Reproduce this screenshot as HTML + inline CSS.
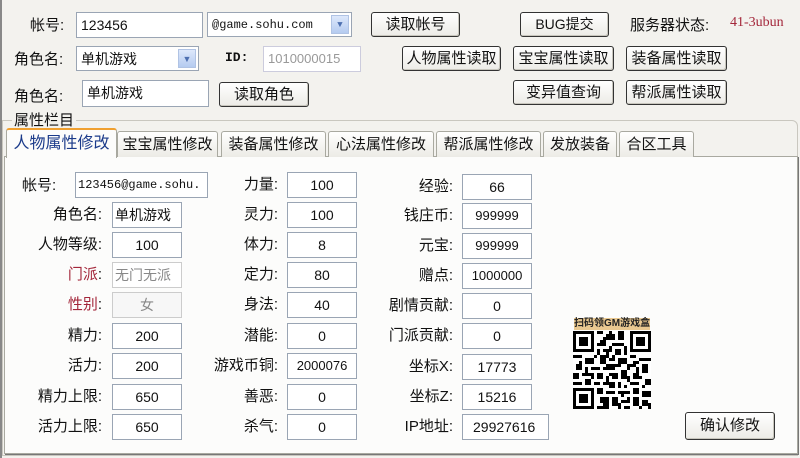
<!DOCTYPE html>
<html><head><meta charset="utf-8">
<style>
*{box-sizing:border-box;margin:0;padding:0}
body{width:800px;height:458px;background:#f3f2ee;font-family:"Liberation Sans","Noto Sans CJK SC",sans-serif;font-size:15px;color:#111;position:relative;overflow:hidden}
.a{position:absolute;white-space:nowrap}
.in{position:absolute;background:#fff;border:1px solid #9aa5b4;height:26px;line-height:24px;padding-left:4px;font-size:14px}
.c{text-align:center;padding-left:0}
.btn{position:absolute;border:1px solid #333;border-radius:3px;background:linear-gradient(#fff,#ecebe6);height:25px;line-height:23px;text-align:center;font-size:15px;box-shadow:inset -1px -1px 0 #c8c6bd}
.dd{position:absolute;right:2px;top:2px;width:18px;bottom:2px;background:linear-gradient(#dde8fb,#b5cbf0);border:1px solid #b0c3e4;color:#4d6fb0;font-size:9px;text-align:center;line-height:18px}
.lbl{position:absolute;text-align:right;width:100px;white-space:nowrap;font-size:15px;line-height:26px}
.tab{position:absolute;top:131px;height:26px;border:1px solid #a9a9a0;border-bottom:none;background:linear-gradient(#fff,#ecebe6);text-align:center;line-height:25px;font-size:15px;border-radius:3px 3px 0 0}
.red{color:#a3263a}
</style></head><body>
<div style="position:absolute;left:0;top:0;width:2px;height:458px;background:#888"></div>

<div class="a" style="left:30px;top:14px">帐号:</div>
<div class="in" style="left:76px;top:12px;width:127px;height:26px">123456</div>
<div class="in" style="left:207px;top:12px;width:145px;height:25px;font-family:'Liberation Mono',monospace;font-size:12px">@game.sohu.com<div class="dd">▼</div></div>
<div class="btn" style="left:371px;top:12px;width:89px">读取帐号</div>
<div class="btn" style="left:520px;top:12px;width:89px;font-size:14px">BUG提交</div>
<div class="a" style="left:630px;top:14px">服务器状态:</div>
<div class="a red" style="left:730px;top:15px;font-family:'Liberation Serif',serif;font-size:14px">41-3ubun</div>

<div class="a" style="left:14px;top:48px">角色名:</div>
<div class="in" style="left:76px;top:46px;width:123px;height:25px">单机游戏<div class="dd">▼</div></div>
<div class="a" style="left:225px;top:50px;font-family:'Liberation Mono',monospace;font-size:13px;font-weight:bold">ID:</div>
<div class="in" style="left:263px;top:46px;width:98px;color:#999;font-size:13px;border-color:#ccd">1010000015</div>
<div class="btn" style="left:402px;top:46px;width:99px">人物属性读取</div>
<div class="btn" style="left:513px;top:46px;width:101px">宝宝属性读取</div>
<div class="btn" style="left:626px;top:46px;width:101px">装备属性读取</div>

<div class="a" style="left:14px;top:85px">角色名:</div>
<div class="in" style="left:82px;top:80px;width:127px;height:27px">单机游戏</div>
<div class="btn" style="left:219px;top:82px;width:90px">读取角色</div>
<div class="btn" style="left:513px;top:80px;width:101px">变异值查询</div>
<div class="btn" style="left:626px;top:80px;width:101px">帮派属性读取</div>

<div style="position:absolute;left:2px;top:120px;width:796px;height:336px;border:1px solid #c9c7bf;border-radius:0 6px 0 0"></div>
<div class="a" style="left:12px;top:109px;background:#f3f2ee;padding:0 2px">属性栏目</div>

<div style="position:absolute;left:4px;top:156px;width:794px;height:298px;background:#fcfcfb;border:1px solid #a9a9a0;box-shadow:1px 1px 0 #777"></div>
<div class="tab" style="left:117px;width:101px">宝宝属性修改</div>
<div class="tab" style="left:221px;width:105px">装备属性修改</div>
<div class="tab" style="left:328px;width:106px">心法属性修改</div>
<div class="tab" style="left:436px;width:105px">帮派属性修改</div>
<div class="tab" style="left:543px;width:74px">发放装备</div>
<div class="tab" style="left:619px;width:75px">合区工具</div>
<div class="tab" style="left:6px;top:128px;width:111px;height:30px;background:#fcfcfb;border-top:2px solid #f0a030;color:#1a3a8a;font-size:16px;line-height:28px">人物属性修改</div>

<div class="a" style="left:22px;top:174px">帐号:</div>
<div class="in" style="left:75px;top:172px;width:133px;font-family:'Liberation Mono',monospace;font-size:12px;padding-left:2px">123456@game.sohu.</div>

<div class="lbl" style="left:2px;top:202px">角色名:</div>
<div class="in" style="left:112px;top:202px;width:70px;padding-left:2px">单机游戏</div>
<div class="lbl" style="left:2px;top:232px">人物等级:</div><div class="in c" style="left:112px;top:232px;width:70px">100</div>
<div class="lbl" style="left:2px;top:262px"><span class="red">门派</span>:</div><div class="in" style="left:112px;top:262px;width:70px;color:#888;border-color:#ccc;padding-left:2px">无门无派</div>
<div class="lbl" style="left:2px;top:292px"><span class="red">性别</span>:</div><div class="in c" style="left:112px;top:292px;width:70px;color:#888;border-color:#ccc;background:#f7f7f7">女</div>
<div class="lbl" style="left:2px;top:323px">精力:</div><div class="in c" style="left:112px;top:323px;width:70px">200</div>
<div class="lbl" style="left:2px;top:353px">活力:</div><div class="in c" style="left:112px;top:353px;width:70px">200</div>
<div class="lbl" style="left:2px;top:384px">精力上限:</div><div class="in c" style="left:112px;top:384px;width:70px">650</div>
<div class="lbl" style="left:2px;top:414px">活力上限:</div><div class="in c" style="left:112px;top:414px;width:70px">650</div>

<div class="lbl" style="left:178px;top:172px">力量:</div><div class="in c" style="left:287px;top:172px;width:70px">100</div>
<div class="lbl" style="left:178px;top:202px">灵力:</div><div class="in c" style="left:287px;top:202px;width:70px">100</div>
<div class="lbl" style="left:178px;top:232px">体力:</div><div class="in c" style="left:287px;top:232px;width:70px">8</div>
<div class="lbl" style="left:178px;top:262px">定力:</div><div class="in c" style="left:287px;top:262px;width:70px">80</div>
<div class="lbl" style="left:178px;top:292px">身法:</div><div class="in c" style="left:287px;top:292px;width:70px">40</div>
<div class="lbl" style="left:178px;top:323px">潜能:</div><div class="in c" style="left:287px;top:323px;width:70px">0</div>
<div class="lbl" style="left:178px;top:353px">游戏币铜:</div><div class="in c" style="left:287px;top:353px;width:70px;font-size:13px">2000076</div>
<div class="lbl" style="left:178px;top:384px">善恶:</div><div class="in c" style="left:287px;top:384px;width:70px">0</div>
<div class="lbl" style="left:178px;top:414px">杀气:</div><div class="in c" style="left:287px;top:414px;width:70px">0</div>

<div class="lbl" style="left:353px;top:174px">经验:</div><div class="in c" style="left:462px;top:174px;width:70px">66</div>
<div class="lbl" style="left:353px;top:203px">钱庄币:</div><div class="in c" style="left:462px;top:203px;width:70px;font-size:13px">999999</div>
<div class="lbl" style="left:353px;top:233px">元宝:</div><div class="in c" style="left:462px;top:233px;width:70px;font-size:13px">999999</div>
<div class="lbl" style="left:353px;top:263px">赠点:</div><div class="in c" style="left:462px;top:263px;width:70px;font-size:13px">1000000</div>
<div class="lbl" style="left:353px;top:293px">剧情贡献:</div><div class="in c" style="left:462px;top:293px;width:70px">0</div>
<div class="lbl" style="left:353px;top:323px">门派贡献:</div><div class="in c" style="left:462px;top:323px;width:70px">0</div>
<div class="lbl" style="left:353px;top:354px">坐标X:</div><div class="in c" style="left:462px;top:354px;width:70px">17773</div>
<div class="lbl" style="left:353px;top:384px">坐标Z:</div><div class="in c" style="left:462px;top:384px;width:70px">15216</div>
<div class="lbl" style="left:353px;top:414px">IP地址:</div><div class="in" style="left:462px;top:414px;width:87px;padding-left:10px">29927616</div>

<div class="a" style="left:574px;top:318px;font-size:10px;font-weight:bold;color:#222;background:#e9c890;line-height:12px">扫码领GM游戏盒</div>
<svg style="position:absolute;left:573px;top:331px" width="78" height="78" viewBox="0 0 26 26" shape-rendering="crispEdges">
<rect width="26" height="26" fill="#fff"/>
<g fill="#000">
<rect x="0" y="0" width="7" height="7"/><rect x="19" y="0" width="7" height="7"/><rect x="0" y="19" width="7" height="7"/>
</g>
<g fill="#fff"><rect x="1" y="1" width="5" height="5"/><rect x="20" y="1" width="5" height="5"/><rect x="1" y="20" width="5" height="5"/></g>
<g fill="#000"><rect x="2" y="2" width="3" height="3"/><rect x="21" y="2" width="3" height="3"/><rect x="2" y="21" width="3" height="3"/>
<path d="M8 0h2v1h-2zM11 1h3v2h-3zM15 0h2v3h-2zM9 3h2v2h-2zM13 4h4v1h-4zM8 6h1v2h-1zM10 6h3v1h-3zM14 6h2v2h-2zM17 5h1v3h-1z
M0 8h3v1h-3zM4 9h3v2h-3zM9 8h2v3h-2zM12 9h2v1h-2zM15 9h3v2h-3zM19 8h2v1h-2zM22 9h4v1h-4zM1 11h2v2h-2zM6 12h3v1h-3zM11 11h3v2h-3zM18 11h3v1h-3zM23 11h2v3h-2z
M0 14h2v2h-2zM3 14h4v1h-4zM8 14h2v2h-2zM12 14h3v1h-3zM16 13h2v3h-2zM20 14h2v2h-2zM4 16h2v2h-2zM10 17h4v1h-4zM15 17h1v2h-1zM19 17h3v1h-3zM24 16h2v2h-2z
M8 19h2v2h-2zM11 20h3v1h-3zM15 20h4v1h-4zM20 19h2v2h-2zM23 20h3v2h-3zM9 22h3v2h-3zM13 22h2v3h-2zM16 23h3v1h-3zM20 22h2v3h-2zM23 23h2v2h-2zM8 25h4v1h-4zM17 25h2v1h-2z
M12 0h1v1h-1zM10 2h1v1h-1zM8 4h1v1h-1zM12 5h1v1h-1zM16 4h1v1h-1zM11 7h1v2h-1zM13 8h1v1h-1zM2 10h1v1h-1zM7 8h1v1h-1zM20 10h2v1h-2zM14 11h2v1h-2zM4 12h1v2h-1zM10 12h1v1h-1zM18 12h1v1h-1zM21 12h1v2h-1zM6 15h1v1h-1zM11 15h1v2h-1zM13 15h2v1h-2zM18 15h1v2h-1zM22 15h1v1h-1zM0 17h3v1h-3zM7 17h2v1h-2zM17 18h1v1h-1zM23 18h1v1h-1zM12 18h2v1h-2zM16 21h1v1h-1zM18 22h1v1h-1zM10 24h2v1h-2zM15 24h1v2h-1zM22 25h1v1h-1zM25 24h1v2h-1z"/></g>
</svg>

<div class="btn" style="left:685px;top:412px;width:90px;height:28px;line-height:26px">确认修改</div>
</body></html>
